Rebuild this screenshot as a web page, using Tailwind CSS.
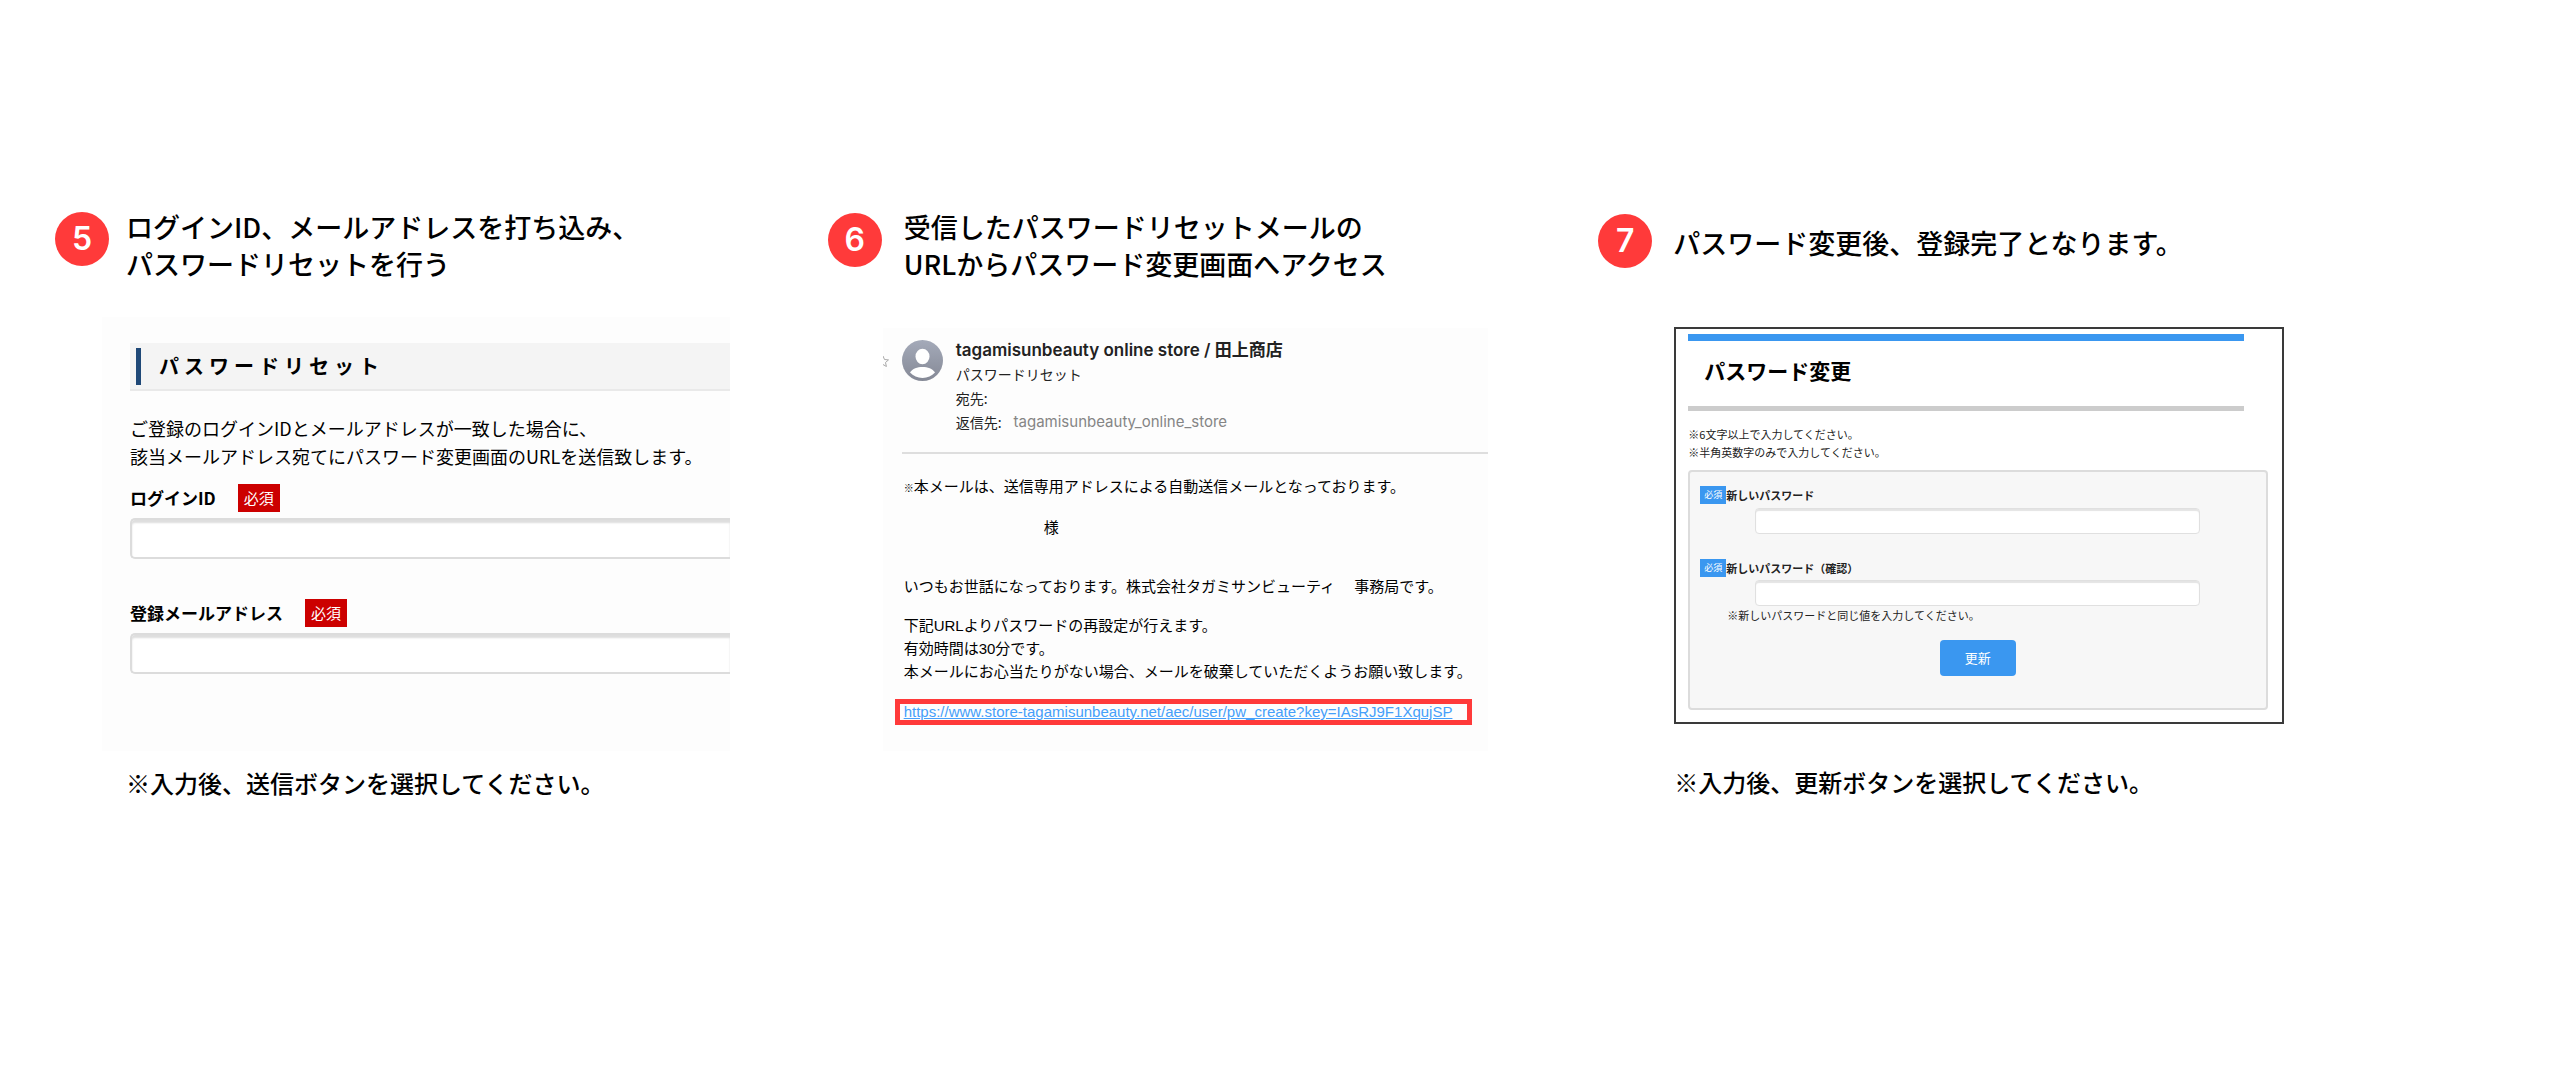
<!DOCTYPE html>
<html lang="ja">
<head>
<meta charset="utf-8">
<title>パスワードリセット手順</title>
<script src="https://cdn.jsdelivr.net/npm/@tailwindcss/browser@4"></script>
</head>
<body class="min-h-screen bg-white font-['Noto_Sans_CJK_JP',sans-serif] text-black">
<main class="grid grid-cols-3 pt-[208px] pr-[190px] pb-16 pl-[55px]">

  <!-- Step 5 -->
  <section>
    <header class="flex h-[76px] items-start gap-[17px] whitespace-nowrap">
      <span class="mt-1 flex size-[54px] shrink-0 items-center justify-center rounded-full bg-[#ff3a3a] font-['Inter',sans-serif] text-[32px] font-semibold text-white">5</span>
      <h2 class="text-[27px] leading-[37px] font-medium">ログインID、メールアドレスを打ち込み、<br>パスワードリセットを行う</h2>
    </header>
    <form class="mt-[33px] mr-[97px] ml-[47px] h-[434px] overflow-hidden bg-[#fdfdfd] pt-[26px] pl-7 text-black">
      <div class="flex h-12 items-center border-b-2 border-[#e9e9e9] bg-[#f4f4f4] pl-1.5">
        <span class="h-[37px] w-[5px] bg-[#1f4877]"></span>
        <h3 class="ml-[18px] text-[20px] font-bold tracking-[5px]">パスワードリセット</h3>
      </div>
      <p class="mt-[23px] text-[18px] leading-7 whitespace-nowrap">ご登録のログインIDとメールアドレスが一致した場合に、<br>該当メールアドレス宛てにパスワード変更画面のURLを送信致します。</p>
      <div class="mt-3.5 flex items-center gap-[22px]">
        <label for="login-id" class="text-[17px] leading-7 font-bold">ログインID</label>
        <span class="h-7 w-[42px] bg-[#cc0000] text-center text-[15px] leading-7 text-white">必須</span>
      </div>
      <input id="login-id" type="text" class="mt-1.5 block h-[41px] w-full rounded-l-[5px] border-2 border-r-0 border-[#dcdcdc] bg-white px-2 shadow-[inset_0_3px_2px_#dedede] outline-none">
      <div class="mt-10 flex items-center gap-[22px]">
        <label for="email" class="text-[17px] leading-7 font-bold">登録メールアドレス</label>
        <span class="h-7 w-[42px] bg-[#cc0000] text-center text-[15px] leading-7 text-white">必須</span>
      </div>
      <input id="email" type="text" class="mt-1.5 block h-[41px] w-full rounded-l-[5px] border-2 border-r-0 border-[#dcdcdc] bg-white px-2 shadow-[inset_0_3px_2px_#dedede] outline-none">
    </form>
    <p class="mt-3.5 ml-[71px] text-[24px] leading-9 font-medium whitespace-nowrap">※入力後、送信ボタンを選択してください。</p>
  </section>

  <!-- Step 6 -->
  <section>
    <header class="flex h-[76px] items-start gap-[22px] whitespace-nowrap">
      <span class="mt-[5px] ml-px flex size-[54px] shrink-0 items-center justify-center rounded-full bg-[#ff3a3a] font-['Inter',sans-serif] text-[32px] font-semibold text-white">6</span>
      <h2 class="text-[27px] leading-[37px] font-medium">受信したパスワードリセットメールの<br>URLからパスワード変更画面へアクセス</h2>
    </header>
    <article class="mt-[44px] mr-[110px] ml-[56px] h-[423px] bg-[#fdfdfd]">
      <div class="flex pt-[10px]">
        <svg class="mt-[17px] h-3 w-[6px] shrink-0" viewBox="6 0 6 12" fill="none" stroke="#a8a8a8"><path d="M6 1l1.500 3.500 4 .4-3 2.600.9 4L6 9.500"/></svg>
        <svg class="mt-0.5 ml-[13px] size-[41px] shrink-0" viewBox="0 0 41 41">
          <defs><linearGradient id="av" x1="0" y1="0" x2="0" y2="1"><stop offset="0" stop-color="#a4aab9"/><stop offset="1" stop-color="#858996"/></linearGradient></defs>
          <circle cx="20.500" cy="20.500" r="20.500" fill="url(#av)"/>
          <ellipse cx="20.500" cy="16.500" rx="7" ry="7.800" fill="#fff"/>
          <path d="M8 32.500c2.500-3.600 7.200-5.400 12.500-5.400s10 1.800 12.500 5.400c-3.200 3.500-7.500 5.400-12.500 5.400S11.200 36 8 32.500z" fill="#fff"/>
        </svg>
        <div class="ml-[13px] text-[14px] leading-6 whitespace-nowrap text-[#222]">
          <h3 class="font-['Inter','Noto_Sans_CJK_JP',sans-serif] text-[17px] font-semibold">tagamisunbeauty online store / 田上商店</h3>
          <p>パスワードリセット</p>
          <dl class="grid grid-cols-[auto_1fr] gap-x-3 leading-6">
            <dt>宛先:</dt><dd></dd>
            <dt>返信先:</dt><dd class="font-['Inter',sans-serif] text-[15px] text-[#858585]">tagamisunbeauty_online_store</dd>
          </dl>
        </div>
      </div>
      <hr class="mt-[18px] ml-[19px] border-t-2 border-[#dedede]">
      <div class="pl-[21px] font-['Liberation_Sans','Noto_Sans_CJK_JP',sans-serif] text-[15px] leading-[23px] whitespace-nowrap text-black">
        <p class="mt-[21px]"><span class="text-[10px] font-bold">※</span>本メールは、送信専用アドレスによる自動送信メールとなっております。</p>
        <p class="mt-4 pl-[140px]">様</p>
        <p class="mt-9">いつもお世話になっております。株式会社タガミサンビューティ　 事務局です。</p>
        <p class="mt-4">下記URLよりパスワードの再設定が行えます。<br>有効時間は30分です。<br>本メールにお心当たりがない場合、メールを破棄していただくようお願い致します。</p>
      </div>
      <div class="mt-4 ml-3 flex h-[26px] w-[577px] items-center border-[5px] border-[#ff3a3a] pl-1">
        <a href="https://www.store-tagamisunbeauty.net/aec/user/pw_create?key=IAsRJ9F1XqujSP" class="font-['Liberation_Sans',sans-serif] text-[15px] leading-4 whitespace-nowrap text-[#459ffa] underline">https://www.store-tagamisunbeauty.net/aec/user/pw_create?key=IAsRJ9F1XqujSP</a>
      </div>
    </article>
  </section>

  <!-- Step 7 -->
  <section>
    <header class="flex h-[76px] items-start gap-[21px] whitespace-nowrap">
      <span class="mt-[6px] flex size-[54px] shrink-0 items-center justify-center rounded-full bg-[#ff3a3a] font-['Inter',sans-serif] text-[32px] font-semibold text-white">7</span>
      <h2 class="pt-4 text-[27px] leading-[37px] font-medium">パスワード変更後、登録完了となります。</h2>
    </header>
    <div class="mt-[43px] mr-[86px] ml-[76px] border-2 border-[#3a3a3a] pt-[5px] pr-3.5 pb-3 pl-3 text-[11px] text-[#222]">
      <div class="mr-6 flex h-[77px] items-center border-t-[7px] border-b-[5px] border-t-[#3a97f0] border-b-[#cccccc] pb-1.5 pl-4">
        <h3 class="text-[21px] font-bold text-black">パスワード変更</h3>
      </div>
      <p class="mt-3.5 leading-[18px]">※6文字以上で入力してください。<br>※半角英数字のみで入力してください。</p>
      <form class="mt-[9px] h-[240px] rounded-[4px] border-2 border-[#dcdcdc] bg-[#f7f7f7] pt-3.5 pl-2.5">
        <div class="flex items-center leading-[18px]">
          <span class="w-[26px] bg-[#3a97f0] text-center text-[9px] text-white">必須</span>
          <label for="pw" class="font-bold">新しいパスワード</label>
        </div>
        <input id="pw" type="password" class="mt-1 ml-[55px] block h-[26px] w-[calc(100%-121px)] rounded-[4px] border border-[#e0e0e0] bg-white px-2 shadow-[inset_0_2px_1px_#e4e4e4] outline-none">
        <div class="mt-[25px] flex items-center leading-[18px]">
          <span class="w-[26px] bg-[#3a97f0] text-center text-[9px] text-white">必須</span>
          <label for="pw2" class="font-bold">新しいパスワード（確認）</label>
        </div>
        <input id="pw2" type="password" class="mt-[3px] ml-[55px] block h-[26px] w-[calc(100%-121px)] rounded-[4px] border border-[#e0e0e0] bg-white px-2 shadow-[inset_0_2px_1px_#e4e4e4] outline-none">
        <p class="ml-[27px] leading-[18px]">※新しいパスワードと同じ値を入力してください。</p>
        <div class="mt-4 mr-[66px] ml-[55px] flex justify-center">
          <button type="button" class="h-9 w-[76px] rounded-[4px] bg-[#3a97f0] text-[13px] text-white">更新</button>
        </div>
      </form>
    </div>
    <p class="mt-10 ml-[76px] text-[24px] leading-9 font-medium whitespace-nowrap">※入力後、更新ボタンを選択してください。</p>
  </section>
</main>
</body>
</html>
